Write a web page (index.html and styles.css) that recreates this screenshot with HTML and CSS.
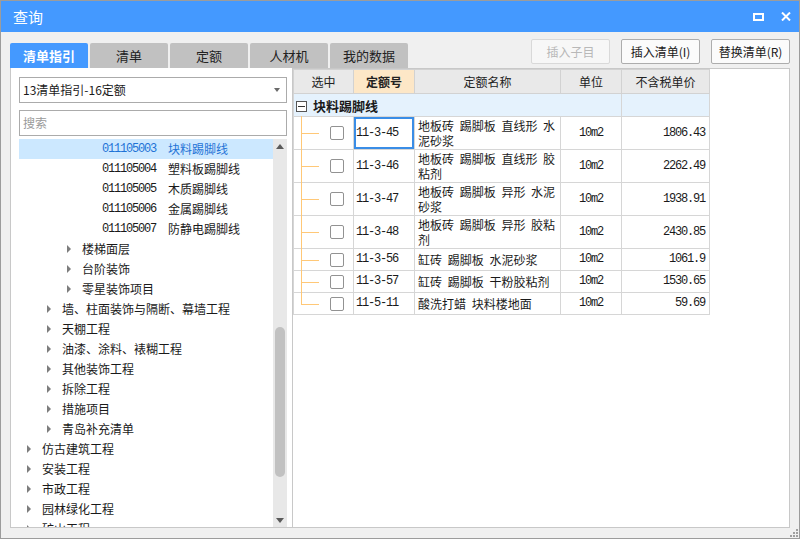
FILE: index.html
```html
<!DOCTYPE html>
<html lang="zh">
<head>
<meta charset="utf-8">
<title>查询</title>
<link rel="stylesheet" href="styles.css">
</head>
<body>
<div class="window">
  <div class="titlebar">
    <span class="title">查询</span>
    <div class="win-ctrls">
      <svg width="11" height="8" viewBox="0 0 11 8"><rect x="1" y="1" width="9" height="6" fill="none" stroke="#fff" stroke-width="2"/></svg>
      <svg width="10" height="9" viewBox="0 0 10 9"><path d="M1 0.5 L9 8.5 M9 0.5 L1 8.5" stroke="#fff" stroke-width="2" fill="none"/></svg>
    </div>
  </div>
  <div class="toolbar">
    <div class="tabs">
      <div class="tab active">清单指引</div>
      <div class="tab">清单</div>
      <div class="tab">定额</div>
      <div class="tab">人材机</div>
      <div class="tab">我的数据</div>
    </div>
    <div class="actions">
      <button class="btn" disabled>插入子目</button>
      <button class="btn">插入清单(I)</button>
      <button class="btn">替换清单(R)</button>
    </div>
  </div>
  <div class="main">
    <div class="left">
      <div class="select">13清单指引-16定额<span class="caret"></span></div>
      <div class="search">搜索</div>
      <div class="tree-wrap">
        <div class="tree">
          <div class="row leaf selected"><span class="code">011105003</span><span>块料踢脚线</span></div>
          <div class="row leaf"><span class="code">011105004</span><span>塑料板踢脚线</span></div>
          <div class="row leaf"><span class="code">011105005</span><span>木质踢脚线</span></div>
          <div class="row leaf"><span class="code">011105006</span><span>金属踢脚线</span></div>
          <div class="row leaf"><span class="code">011105007</span><span>防静电踢脚线</span></div>
          <div class="row l2"><span class="tri"></span>楼梯面层</div>
          <div class="row l2"><span class="tri"></span>台阶装饰</div>
          <div class="row l2"><span class="tri"></span>零星装饰项目</div>
          <div class="row l1"><span class="tri"></span>墙、柱面装饰与隔断、幕墙工程</div>
          <div class="row l1"><span class="tri"></span>天棚工程</div>
          <div class="row l1"><span class="tri"></span>油漆、涂料、裱糊工程</div>
          <div class="row l1"><span class="tri"></span>其他装饰工程</div>
          <div class="row l1"><span class="tri"></span>拆除工程</div>
          <div class="row l1"><span class="tri"></span>措施项目</div>
          <div class="row l1"><span class="tri"></span>青岛补充清单</div>
          <div class="row l0"><span class="tri"></span>仿古建筑工程</div>
          <div class="row l0"><span class="tri"></span>安装工程</div>
          <div class="row l0"><span class="tri"></span>市政工程</div>
          <div class="row l0"><span class="tri"></span>园林绿化工程</div>
          <div class="row l0"><span class="tri"></span>矿山工程</div>
        </div>
        <div class="vscroll">
          <div class="arrow up"></div>
          <div class="track"><div class="thumb"></div></div>
          <div class="arrow down"></div>
        </div>
      </div>
    </div>
    <div class="right">
      <table class="grid">
        <colgroup>
          <col class="c-sel"><col class="c-code"><col class="c-name"><col class="c-unit"><col class="c-price">
        </colgroup>
        <thead>
          <tr>
            <th>选中</th>
            <th class="sorted">定额号</th>
            <th>定额名称</th>
            <th>单位</th>
            <th>不含税单价</th>
          </tr>
        </thead>
        <tbody>
          <tr class="group">
            <td colspan="4"><span class="minus"></span><b>块料踢脚线</b></td>
            <td></td>
          </tr>
          <tr class="r2">
            <td class="sel"><span class="cb"></span></td>
            <td class="code current">11-3-45</td>
            <td class="name">地板砖 踢脚板 直线形 水泥砂浆</td>
            <td class="unit">10m2</td>
            <td class="price">1806.43</td>
          </tr>
          <tr class="r2">
            <td class="sel"><span class="cb"></span></td>
            <td class="code">11-3-46</td>
            <td class="name">地板砖 踢脚板 直线形 胶粘剂</td>
            <td class="unit">10m2</td>
            <td class="price">2262.49</td>
          </tr>
          <tr class="r2">
            <td class="sel"><span class="cb"></span></td>
            <td class="code">11-3-47</td>
            <td class="name">地板砖 踢脚板 异形 水泥砂浆</td>
            <td class="unit">10m2</td>
            <td class="price">1938.91</td>
          </tr>
          <tr class="r2">
            <td class="sel"><span class="cb"></span></td>
            <td class="code">11-3-48</td>
            <td class="name">地板砖 踢脚板 异形 胶粘剂</td>
            <td class="unit">10m2</td>
            <td class="price">2430.85</td>
          </tr>
          <tr class="r1">
            <td class="sel"><span class="cb"></span></td>
            <td class="code">11-3-56</td>
            <td class="name">缸砖 踢脚板 水泥砂浆</td>
            <td class="unit">10m2</td>
            <td class="price">1061.9</td>
          </tr>
          <tr class="r1">
            <td class="sel"><span class="cb"></span></td>
            <td class="code">11-3-57</td>
            <td class="name">缸砖 踢脚板 干粉胶粘剂</td>
            <td class="unit">10m2</td>
            <td class="price">1530.65</td>
          </tr>
          <tr class="r1 last">
            <td class="sel"><span class="cb"></span></td>
            <td class="code">11-5-11</td>
            <td class="name">酸洗打蜡 块料楼地面</td>
            <td class="unit">10m2</td>
            <td class="price">59.69</td>
          </tr>
        </tbody>
      </table>
    </div>
  </div>
  <svg class="grip" width="10" height="10" viewBox="0 0 10 10">
    <rect x="7" y="1" width="2" height="2" fill="#a0a0a0"/>
    <rect x="4" y="4" width="2" height="2" fill="#a0a0a0"/>
    <rect x="7" y="4" width="2" height="2" fill="#a0a0a0"/>
    <rect x="1" y="7" width="2" height="2" fill="#a0a0a0"/>
    <rect x="4" y="7" width="2" height="2" fill="#a0a0a0"/>
    <rect x="7" y="7" width="2" height="2" fill="#a0a0a0"/>
  </svg>
</div>
</body>
</html>
```

FILE: styles.css
```css
* { box-sizing: border-box; margin: 0; padding: 0; }
html, body { width: 800px; height: 540px; overflow: hidden; background: #ffffff; }
body {
  font-family: "Noto Sans CJK SC", "Microsoft YaHei", sans-serif;
  font-size: 12px;
  color: #1a1a1a;
}

.window {
  position: relative;
  width: 800px;
  height: 539px;
  border: 1px solid #9c9c9c;
  background: #f0f0f0;
  display: flex;
  flex-direction: column;
}

/* title bar */
.titlebar {
  flex: none;
  height: 31px;
  background: #4499ff;
  color: #fff;
  display: flex;
  align-items: center;
  justify-content: space-between;
  padding: 0 8px 0 12px;
}
.title { font-size: 15px; line-height: 20px; }
.win-ctrls { display: flex; align-items: center; gap: 17px; }
.win-ctrls svg { display: block; }

/* toolbar with tabs and buttons */
.toolbar {
  flex: none;
  height: 36px;
  display: flex;
  justify-content: space-between;
  padding: 0 9px;
}
.tabs { display: flex; gap: 2px; align-self: flex-end; }
.tab {
  width: 78px;
  height: 25px;
  background: #c1c1c1;
  color: #222;
  font-size: 13px;
  display: flex;
  align-items: center;
  justify-content: center;
  border-radius: 2px 2px 0 0;
}
.tab.active { background: #4499ff; color: #fff; font-weight: bold; }

.actions { display: flex; gap: 11px; padding-top: 7px; }
.btn {
  width: 79px;
  height: 25px;
  background: #fbfbfb;
  border: 1px solid #adadad;
  border-radius: 2px;
  font-family: inherit;
  font-size: 12px;
  color: #1a1a1a;
}
.btn:disabled { border-color: #d9d9d9; color: #b8b8b8; background: #f7f7f7; }

/* main area */
.main {
  flex: none;
  height: 460px;
  display: flex;
  padding: 0 9px;
}

.left {
  width: 282px;
  background: #fff;
  border-left: 1px solid #c8c8c8;
  border-bottom: 1px solid #c8c8c8;
  padding: 9px 5px 0 8px;
  display: flex;
  flex-direction: column;
}
.select {
  position: relative;
  height: 26px;
  border: 1px solid #ababab;
  padding-left: 3px;
  line-height: 24px;
  font-size: 12px;
  color: #1a1a1a;
}
.caret {
  position: absolute;
  right: 6px;
  top: 10px;
  width: 0;
  height: 0;
  border-left: 3px solid transparent;
  border-right: 3px solid transparent;
  border-top: 4px solid #6a6a6a;
}
.search {
  margin-top: 7px;
  height: 26px;
  border: 1px solid #ababab;
  padding-left: 3px;
  line-height: 24px;
  color: #9a9a9a;
  font-size: 12px;
}
.tree-wrap {
  margin-top: 3px;
  flex: 1;
  display: flex;
  overflow: hidden;
}
.tree { flex: 1; overflow: hidden; }
.row {
  height: 20px;
  line-height: 20px;
  white-space: nowrap;
  display: flex;
  align-items: center;
  color: #1a1a1a;
}
.row.selected { background: #cce8ff; color: #1f73d6; }
.row.leaf { padding-left: 83px; }
.row .code {
  width: 66px;
  font-family: "Liberation Mono", "DejaVu Sans Mono", monospace;
  font-size: 12px;
  letter-spacing: -1.2px;
}
.row.l0 { padding-left: 8px; }
.row.l1 { padding-left: 28px; }
.row.l2 { padding-left: 48px; }
.tri {
  width: 0;
  height: 0;
  margin-right: 11px;
  border-left: 4px solid #7d7d7d;
  border-top: 4px solid transparent;
  border-bottom: 4px solid transparent;
}

.vscroll {
  width: 14px;
  flex: none;
  background: #e8e8e8;
  display: flex;
  flex-direction: column;
}
.arrow { height: 14px; flex: none; display: flex; align-items: center; justify-content: center; }
.arrow::before {
  content: "";
  width: 0;
  height: 0;
  border-left: 4px solid transparent;
  border-right: 4px solid transparent;
}
.arrow.up::before { border-bottom: 5px solid #5a5a5a; }
.arrow.down::before { border-top: 5px solid #5a5a5a; }
.track { flex: 1; display: flex; justify-content: center; }
.thumb {
  width: 10px;
  height: 150px;
  margin-top: 174px;
  background: #c1c1c1;
  border-radius: 5px;
}

/* right panel */
.right {
  width: 498px;
  background: #fff;
  border: 1px solid #c8c8c8;
}
.grid {
  border-collapse: collapse;
  table-layout: fixed;
  width: 416px;
}
.c-sel { width: 60px; }
.c-code { width: 61px; }
.c-name { width: 146px; }
.c-unit { width: 61px; }
.c-price { width: 88px; }

.grid th {
  height: 24px;
  background: #e9e9e9;
  border: 1px solid #d2d2d2;
  font-weight: normal;
  font-size: 12px;
  color: #222;
  padding: 0;
}
.grid th.sorted { background: #fde7c7; font-weight: bold; }

.grid td {
  border: 1px solid #d6d6d6;
  padding: 1px 3px;
  vertical-align: middle;
  line-height: 15px;
  font-size: 12px;
}
.grid tr.group td {
  height: 23px;
  background: #e5f2fd;
  padding: 0 2px;
}
.grid tr.group b { font-size: 13px; font-weight: bold; vertical-align: middle; }
.minus {
  display: inline-block;
  position: relative;
  width: 11px;
  height: 11px;
  border: 1px solid #555;
  background: #fff;
  margin-right: 6px;
  vertical-align: middle;
}
.minus::after {
  content: "";
  position: absolute;
  left: 1px;
  right: 1px;
  top: 4px;
  border-top: 1px solid #333;
}
.grid tr.r2 td { height: 33px; }
.grid tr.r1 td { height: 22px; }

.grid td.sel { position: relative; padding: 0 0 0 36px; }
.grid td.sel::before {
  content: "";
  position: absolute;
  left: 7px;
  top: -1px;
  bottom: -1px;
  border-left: 1px solid #ffc877;
}
.grid tr.last td.sel::before { bottom: 50%; }
.grid td.sel::after {
  content: "";
  position: absolute;
  left: 7px;
  top: 50%;
  width: 18px;
  border-top: 1px solid #ffc877;
}
.cb {
  display: block;
  width: 14px;
  height: 14px;
  border: 1px solid #929292;
  border-radius: 2px;
  background: #fff;
}
.grid td.code, .grid td.unit, .grid td.price {
  font-family: "Liberation Mono", "DejaVu Sans Mono", monospace;
  font-size: 12px;
  letter-spacing: -1.2px;
}
.grid td.code { padding-left: 2px; }
.grid td.current { box-shadow: inset 0 0 0 2px #3a8de6; }
.grid td.name { word-spacing: 3px; padding-left: 3px; padding-right: 2px; }
.grid td.unit { text-align: center; }
.grid td.price { text-align: right; padding-right: 4px; }

.grip { position: absolute; right: 0; bottom: 0; }
```
